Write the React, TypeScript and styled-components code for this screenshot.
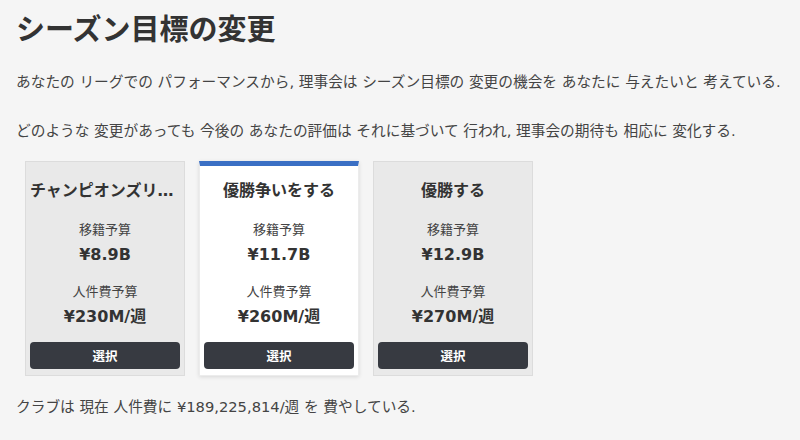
import React from "react";
import styled, { createGlobalStyle } from "styled-components";

const Global = createGlobalStyle`
  html, body { margin: 0; padding: 0; background: #f5f5f5; }
  body { font-family: "DejaVu Sans", "Noto Sans CJK JP", sans-serif; color: #3a3a3a; }
`;

const Page = styled.div`
  width: 800px;
  height: 440px;
  box-sizing: border-box;
  padding: 12px 16px 0 16px;
  overflow: hidden;
`;

const Title = styled.h1`
  margin: 0;
  font-size: 29px;
  line-height: 36px;
  font-weight: bold;
  color: #333;
`;

const Para = styled.p<{ $top: number }>`
  margin: ${(p) => p.$top}px 0 0 0;
  font-size: 14.7px;
  line-height: 20px;
  color: #444;
  white-space: nowrap;
`;

const Cards = styled.div`
  display: flex;
  gap: 14px;
  margin: 20px 0 0 9px;
`;

const Card = styled.div<{ $active?: boolean }>`
  width: 160px;
  height: 215px;
  box-sizing: border-box;
  padding: 0 4px 6px;
  display: flex;
  flex-direction: column;
  align-items: center;
  background: ${(p) => (p.$active ? "#ffffff" : "#e9e9e9")};
  border: 1px solid ${(p) => (p.$active ? "#ececec" : "#dcdcdc")};
  border-top: ${(p) => (p.$active ? "5px solid #3a6fc4" : "1px solid #dcdcdc")};
  box-shadow: ${(p) => (p.$active ? "0 1px 4px rgba(0,0,0,0.12)" : "none")};
`;

const CardTitle = styled.div<{ $active?: boolean }>`
  width: 100%;
  margin-top: ${(p) => (p.$active ? 13 : 17)}px;
  font-size: 16px;
  line-height: 24px;
  font-weight: bold;
  color: #333;
  text-align: center;
  white-space: nowrap;
  overflow: hidden;
  text-overflow: ellipsis;
`;

const Label = styled.div<{ $top: number }>`
  margin-top: ${(p) => p.$top}px;
  font-size: 13px;
  line-height: 18px;
  color: #444;
`;

const Value = styled.div`
  margin-top: 6px;
  font-size: 16px;
  line-height: 20px;
  font-weight: bold;
  color: #333;
`;

const Button = styled.button`
  margin-top: auto;
  width: 100%;
  height: 27px;
  border: none;
  border-radius: 4px;
  background: #373a41;
  color: #fff;
  font-family: "DejaVu Sans", "Noto Sans CJK JP", sans-serif;
  font-size: 12.5px;
  font-weight: bold;
  cursor: pointer;
`;

const goals = [
  { name: "チャンピオンズリーグ出場", transfer: "¥8.9B", wage: "¥230M/週" },
  { name: "優勝争いをする", transfer: "¥11.7B", wage: "¥260M/週", active: true },
  { name: "優勝する", transfer: "¥12.9B", wage: "¥270M/週" },
];

export default function App() {
  return (
    <Page>
      <Global />
      <Title>シーズン目標の変更</Title>
      <Para $top={24}>
        あなたの リーグでの パフォーマンスから, 理事会は シーズン目標の 変更の機会を あなたに 与えたいと 考えている.
      </Para>
      <Para $top={29}>
        どのような 変更があっても 今後の あなたの評価は それに基づいて 行われ, 理事会の期待も 相応に 変化する.
      </Para>
      <Cards>
        {goals.map((g) => (
          <Card key={g.name} $active={g.active}>
            <CardTitle $active={g.active} title={g.name}>{g.name}</CardTitle>
            <Label $top={18}>移籍予算</Label>
            <Value>{g.transfer}</Value>
            <Label $top={18}>人件費予算</Label>
            <Value>{g.wage}</Value>
            <Button>選択</Button>
          </Card>
        ))}
      </Cards>
      <Para $top={21}>クラブは 現在 人件費に ¥189,225,814/週 を 費やしている.</Para>
    </Page>
  );
}
